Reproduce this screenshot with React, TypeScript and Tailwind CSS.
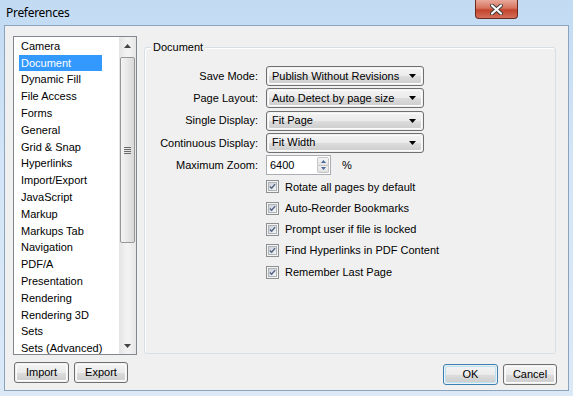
import React from "react";

const items = [
  "Camera", "Document", "Dynamic Fill", "File Access", "Forms", "General", "Grid & Snap",
  "Hyperlinks", "Import/Export", "JavaScript", "Markup", "Markups Tab", "Navigation", "PDF/A",
  "Presentation", "Rendering", "Rendering 3D", "Sets", "Sets (Advanced)",
];

function Arrow() {
  return (
    <svg width="7" height="4" viewBox="0 0 7 4"><path d="M0 0H7L3.5 4Z" fill="#000" /></svg>
  );
}

function Btn({ label, w, def }: { label: string; w: string; def?: boolean }) {
  return (
    <div
      className={`${w} h-[21px] rounded-[3px] border ${def ? "border-[#3c7fb1]" : "border-[#707070]"} p-px`}
    >
      <div
        className={`h-full rounded-[2px] border ${def ? "border-[#b9e2f5]" : "border-[#fcfcfc]"} flex items-center justify-center bg-[linear-gradient(to_bottom,#f2f2f2_0%,#ebebeb_50%,#dddddd_50%,#cfcfcf_100%)] text-[11px] text-black`}
      >
        {label}
      </div>
    </div>
  );
}

function Combo({ value }: { value: string }) {
  return (
    <div className="w-[158px] h-[20px] rounded-[3px] border border-[#707070] p-px">
      <div className="h-full rounded-[2px] border border-[#fbfbfb] flex items-center pl-[3px] pr-[5px] bg-[linear-gradient(to_bottom,#f2f2f2_0%,#ebebeb_50%,#dddddd_50%,#cfcfcf_100%)]">
        <span className="flex-1 text-[11px] text-black leading-none">{value}</span>
        <Arrow />
      </div>
    </div>
  );
}

function Check({ label }: { label: string }) {
  return (
    <div className="h-[21.3px] flex items-center">
      <div className="w-[13px] h-[13px] border border-[#8e8f8f] bg-[#f4f4f4] p-px">
        <div className="w-full h-full border border-[#aeb3b9] bg-[linear-gradient(135deg,#cbcfd5,#f6f6f6)] flex items-center justify-center">
          <svg width="8" height="7" viewBox="0 0 8 7">
            <path d="M1 3.5L3 5.5L7 0.8" stroke="#4d6185" strokeWidth="1.6" fill="none" />
          </svg>
        </div>
      </div>
      <span className="ml-[6px] text-[11px] text-black">{label}</span>
    </div>
  );
}

function Row({ label, children }: { label: string; children: React.ReactNode }) {
  return (
    <div className="flex items-center h-[20px]">
      <div className="w-[114px] text-right text-[11px] text-black pr-px">{label}</div>
      <div className="ml-[7px]">{children}</div>
    </div>
  );
}

export default function App() {
  return (
    <div
      className="w-[573px] h-[396px] bg-[linear-gradient(to_bottom,#c2dbf3_0%,#d3e5f7_40%,#dbe9f7_100%)] flex flex-col overflow-hidden"
      style={{ fontFamily: '"Liberation Sans", Arial, sans-serif' }}
    >
      {/* Title bar */}
      <div className="h-[25px] flex items-start shrink-0">
        <div className="pl-[6px] pt-[4px] text-[12px] text-black tracking-[-0.3px]" style={{ fontFamily: '"Noto Sans", "Liberation Sans", sans-serif' }}>
          Preferences
        </div>
        <div className="flex-1" />
        <div className="mr-[55px] w-[43px] h-[19px] rounded-b-[4px] border border-t-0 border-[#6b2a20] bg-[linear-gradient(to_bottom,#e9a99b_0%,#d7745f_45%,#c4432c_55%,#d3705a_100%)] flex items-center justify-center">
          <svg width="13" height="11" viewBox="0 0 13 11">
            <path d="M2 1.5L11 9.5M11 1.5L2 9.5" stroke="#3a3a3a" strokeWidth="4" strokeLinecap="round" />
            <path d="M2 1.5L11 9.5M11 1.5L2 9.5" stroke="#ffffff" strokeWidth="2.2" strokeLinecap="round" />
          </svg>
        </div>
      </div>

      {/* Client */}
      <div className="ml-[4px] w-[565px] h-[366px] border border-[#8ca3bd] bg-[#f0f0f0] flex pl-[8px] pt-[10px]">
        {/* Left column */}
        <div className="w-[124px] flex flex-col">
          <div className="h-[319px] border border-[#828790] bg-white flex">
            <div className="flex-1 pt-px">
              {items.map((it) => (
                <div key={it} className="h-[16.8px] flex items-center pl-[5px]">
                  <span
                    className={`text-[11px] px-[2px] h-[16px] flex items-center leading-none ${
                      it === "Document" ? "bg-[#3399ff] text-white w-[83px]" : "text-black"
                    }`}
                  >
                    {it}
                  </span>
                </div>
              ))}
            </div>
            {/* Scrollbar */}
            <div className="w-[17px] bg-[linear-gradient(to_right,#e3e3e3,#f1f1f1_40%,#f1f1f1_60%,#e6e6e6)] flex flex-col">
              <div className="h-[17px] flex items-center justify-center">
                <svg width="7" height="4" viewBox="0 0 7 4"><path d="M0 4H7L3.5 0Z" fill="#444" /></svg>
              </div>
              <div className="mt-[3px] mx-[1px] h-[186px] rounded-[2px] border border-[#979797] bg-[linear-gradient(to_right,#f4f4f4,#e7e7e7_50%,#d9d9d9)] flex items-center justify-center">
                <div className="flex flex-col gap-px">
                  <div className="w-[7px] h-px bg-[#6a6a6a]" />
                  <div className="w-[7px] h-px bg-[#6a6a6a]" />
                  <div className="w-[7px] h-px bg-[#6a6a6a]" />
                  <div className="w-[7px] h-px bg-[#6a6a6a]" />
                </div>
              </div>
              <div className="flex-1" />
              <div className="h-[17px] flex items-center justify-center">
                <svg width="7" height="4" viewBox="0 0 7 4"><path d="M0 0H7L3.5 4Z" fill="#444" /></svg>
              </div>
            </div>
          </div>
          <div className="flex mt-[7px] pl-px gap-[5px]">
            <Btn label="Import" w="w-[55px]" />
            <Btn label="Export" w="w-[54px]" />
          </div>
        </div>

        {/* Right column */}
        <div className="ml-[7px] w-[412px] flex flex-col pt-[11px]">
          <div className="relative h-[307px] rounded-[3px] border border-[#d5dfe5] shadow-[inset_1px_1px_0_#ffffff]">
            <div className="absolute left-[6px] top-[-8px] px-[2px] bg-[#f0f0f0] text-[11px] text-black leading-[14px]">
              Document
            </div>
            <div className="pt-[18px] flex flex-col gap-[2.3px]">
              <Row label="Save Mode:"><Combo value="Publish Without Revisions" /></Row>
              <Row label="Page Layout:"><Combo value="Auto Detect by page size" /></Row>
              <Row label="Single Display:"><Combo value="Fit Page" /></Row>
              <Row label="Continuous Display:"><Combo value="Fit Width" /></Row>
              <Row label="Maximum Zoom:">
                <div className="flex items-center">
                  <div className="w-[65px] h-[20px] border border-[#abadb3] bg-white flex">
                    <span className="flex-1 pl-[3px] text-[11px] text-black flex items-center">6400</span>
                    <div className="w-[13px] flex flex-col py-px pr-px">
                      <div className="flex-1 rounded-t-[2px] border border-[#c5c5c5] bg-[linear-gradient(to_bottom,#f6f6f6,#e2e2e2)] flex items-center justify-center">
                        <svg width="5" height="3" viewBox="0 0 5 3"><path d="M0 3H5L2.5 0Z" fill="#4b6b9b" /></svg>
                      </div>
                      <div className="flex-1 rounded-b-[2px] border border-t-0 border-[#c5c5c5] bg-[linear-gradient(to_bottom,#f0f0f0,#e0e0e0)] flex items-center justify-center">
                        <svg width="5" height="3" viewBox="0 0 5 3"><path d="M0 0H5L2.5 3Z" fill="#4b6b9b" /></svg>
                      </div>
                    </div>
                  </div>
                  <span className="ml-[11px] text-[11px] text-black">%</span>
                </div>
              </Row>
            </div>
            <div className="ml-[121px] mt-px flex flex-col">
              <Check label="Rotate all pages by default" />
              <Check label="Auto-Reorder Bookmarks" />
              <Check label="Prompt user if file is locked" />
              <Check label="Find Hyperlinks in PDF Content" />
              <Check label="Remember Last Page" />
            </div>
          </div>
          <div className="flex justify-end gap-[5px] mt-[10px] mr-[-1px]">
            <Btn label="OK" w="w-[55px]" def />
            <Btn label="Cancel" w="w-[54px]" />
          </div>
        </div>
      </div>
    </div>
  );
}
